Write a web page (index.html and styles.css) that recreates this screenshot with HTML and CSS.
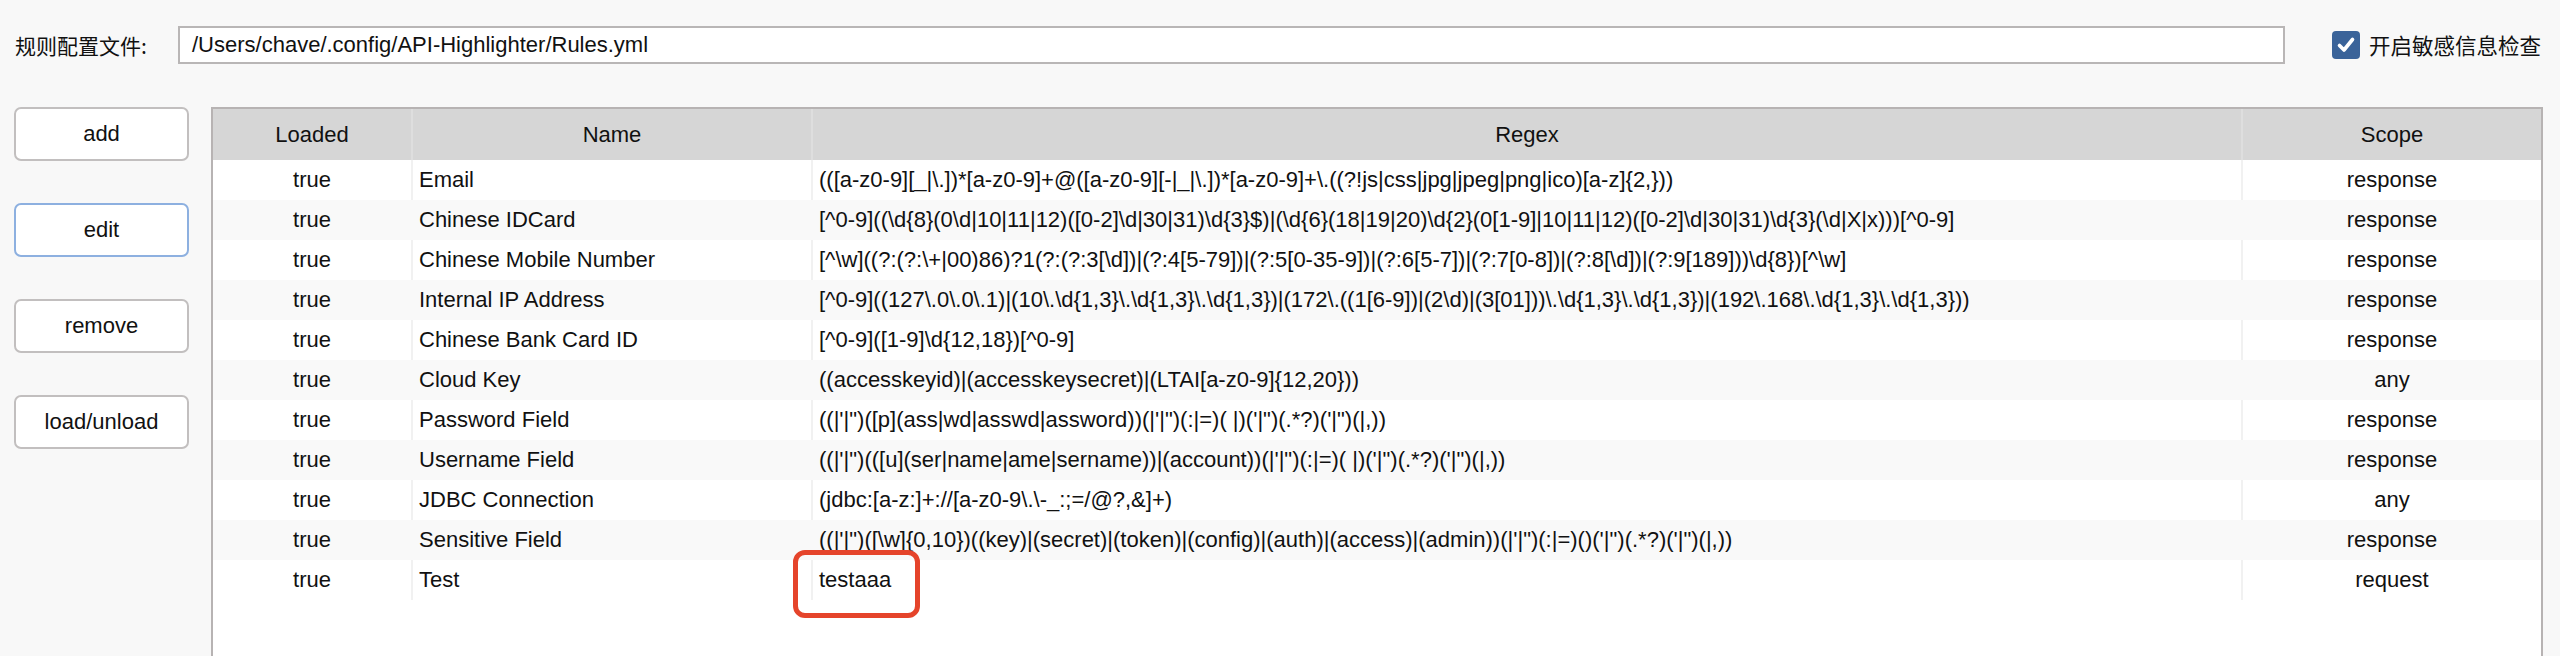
FILE: index.html
```html
<!DOCTYPE html>
<html lang="zh-CN">
<head>
<meta charset="utf-8">
<title>API-Highlighter Rules</title>
<link rel="stylesheet" href="styles.css">
</head>
<body>
<div class="app">
  <div class="topbar">
    <label class="path-label">规则配置文件:</label>
    <div class="path-input">/Users/chave/.config/API-Highlighter/Rules.yml</div>
    <div class="check">
      <span class="check-box">
        <svg width="28" height="28" viewBox="0 0 28 28"><path d="M7.5 14.5 L12 19 L20.5 8.5" fill="none" stroke="#fff" stroke-width="3.6" stroke-linecap="round" stroke-linejoin="round"/></svg>
      </span>
      <span class="check-label">开启敏感信息检查</span>
    </div>
  </div>
  <div class="main">
    <div class="buttons">
      <button class="btn">add</button>
      <button class="btn btn-focus">edit</button>
      <button class="btn">remove</button>
      <button class="btn">load/unload</button>
    </div>
    <div class="table-wrap">
      <table class="rules">
        <colgroup>
          <col class="c-loaded"><col class="c-name"><col class="c-regex"><col class="c-scope">
        </colgroup>
        <thead>
          <tr><th>Loaded</th><th>Name</th><th>Regex</th><th>Scope</th></tr>
        </thead>
        <tbody>
          <tr><td class="center">true</td><td>Email</td><td>(([a-z0-9][_|\.])*[a-z0-9]+@([a-z0-9][-|_|\.])*[a-z0-9]+\.((?!js|css|jpg|jpeg|png|ico)[a-z]{2,}))</td><td class="center">response</td></tr>
          <tr><td class="center">true</td><td>Chinese IDCard</td><td>[^0-9]((\d{8}(0\d|10|11|12)([0-2]\d|30|31)\d{3}$)|(\d{6}(18|19|20)\d{2}(0[1-9]|10|11|12)([0-2]\d|30|31)\d{3}(\d|X|x)))[^0-9]</td><td class="center">response</td></tr>
          <tr><td class="center">true</td><td>Chinese Mobile Number</td><td>[^\w]((?:(?:\+|00)86)?1(?:(?:3[\d])|(?:4[5-79])|(?:5[0-35-9])|(?:6[5-7])|(?:7[0-8])|(?:8[\d])|(?:9[189]))\d{8})[^\w]</td><td class="center">response</td></tr>
          <tr><td class="center">true</td><td>Internal IP Address</td><td>[^0-9]((127\.0\.0\.1)|(10\.\d{1,3}\.\d{1,3}\.\d{1,3})|(172\.((1[6-9])|(2\d)|(3[01]))\.\d{1,3}\.\d{1,3})|(192\.168\.\d{1,3}\.\d{1,3}))</td><td class="center">response</td></tr>
          <tr><td class="center">true</td><td>Chinese Bank Card ID</td><td>[^0-9]([1-9]\d{12,18})[^0-9]</td><td class="center">response</td></tr>
          <tr><td class="center">true</td><td>Cloud Key</td><td>((accesskeyid)|(accesskeysecret)|(LTAI[a-z0-9]{12,20}))</td><td class="center">any</td></tr>
          <tr><td class="center">true</td><td>Password Field</td><td>((|'|")([p](ass|wd|asswd|assword))(|'|")(:|=)( |)('|")(.*?)('|")(|,))</td><td class="center">response</td></tr>
          <tr><td class="center">true</td><td>Username Field</td><td>((|'|")(([u](ser|name|ame|sername))|(account))(|'|")(:|=)( |)('|")(.*?)('|")(|,))</td><td class="center">response</td></tr>
          <tr><td class="center">true</td><td>JDBC Connection</td><td>(jdbc:[a-z:]+://[a-z0-9\.\-_:;=/@?,&amp;]+)</td><td class="center">any</td></tr>
          <tr><td class="center">true</td><td>Sensitive Field</td><td>((|'|")([\w]{0,10})((key)|(secret)|(token)|(config)|(auth)|(access)|(admin))(|'|")(:|=)()('|")(.*?)('|")(|,))</td><td class="center">response</td></tr>
          <tr><td class="center">true</td><td>Test</td><td class="marked">testaaa<span class="annot"></span></td><td class="center">request</td></tr>
        </tbody>
      </table>
    </div>
  </div>
</div>
</body>
</html>
```
FILE: styles.css
```css
html, body {
  margin: 0;
  padding: 0;
  background: #f8f8f8;
  overflow: hidden;
}
body {
  font-family: "Liberation Sans", Arial, "Noto Sans CJK SC", sans-serif;
  font-size: 22px;
  color: #111;
}
.app {
  width: 2560px;
  height: 656px;
  overflow: hidden;
}
.topbar {
  display: flex;
  align-items: center;
  padding: 26px 19px 0 15px;
  height: 38px;
}
.path-label {
  flex: 0 0 163px;
  font-family: "Noto Sans CJK SC", sans-serif;
  font-size: 21px;
  line-height: 38px;
}
.path-input {
  flex: 1;
  height: 34px;
  line-height: 34px;
  border: 2px solid #b9b6b6;
  background: #fff;
  padding-left: 12px;
  white-space: nowrap;
}
.check {
  display: flex;
  align-items: center;
  margin-left: 47px;
  gap: 9px;
}
.check-box {
  width: 28px;
  height: 28px;
  border-radius: 4px;
  background: #3a6399;
  display: flex;
}
.check-label {
  font-family: "Noto Sans CJK SC", sans-serif;
  font-size: 21.5px;
  line-height: 28px;
  white-space: nowrap;
}
.main {
  display: flex;
  margin-top: 43px;
  padding-left: 14px;
}
.buttons {
  flex: 0 0 175px;
  display: flex;
  flex-direction: column;
  gap: 42px;
  margin-right: 22px;
}
.btn {
  height: 54px;
  background: #fff;
  border: 2px solid #c2bfbf;
  border-radius: 7px;
  font-family: inherit;
  font-size: 22px;
  color: #111;
  padding: 0;
}
.btn-focus {
  border-color: #8db0e0;
}
.table-wrap {
  width: 2328px;
  height: 600px;
  background: #fff;
  border: 2px solid #b7b3b3;
  border-right-width: 2px;
}
.rules {
  border-collapse: collapse;
  table-layout: fixed;
  width: 2328px;
}
.c-loaded { width: 199px; }
.c-name { width: 400px; }
.c-regex { width: 1430px; }
.c-scope { width: 299px; }
.rules th {
  height: 51px;
  padding: 0;
  background: #d6d6d6;
  font-weight: normal;
  text-align: center;
  border-left: 2px solid #dedede;
}
.rules th:first-child { border-left: none; }
.rules td {
  height: 40px;
  padding: 0 0 0 6px;
  white-space: nowrap;
  overflow: visible;
  border-left: 2px solid #f1f1f1;
}
.rules td:first-child { border-left: none; }
.rules td.center {
  text-align: center;
  padding: 0;
}
.rules tbody tr:nth-child(even) td {
  background: #f9f9f9;
  border-left-color: #f9f9f9;
}
.rules tbody tr:nth-child(even) td:first-child { border-left: none; }
.marked {
  position: relative;
}
.annot {
  position: absolute;
  left: -20px;
  top: -10px;
  width: 117px;
  height: 58px;
  border: 5px solid #e5442b;
  border-radius: 12px;
}
```
